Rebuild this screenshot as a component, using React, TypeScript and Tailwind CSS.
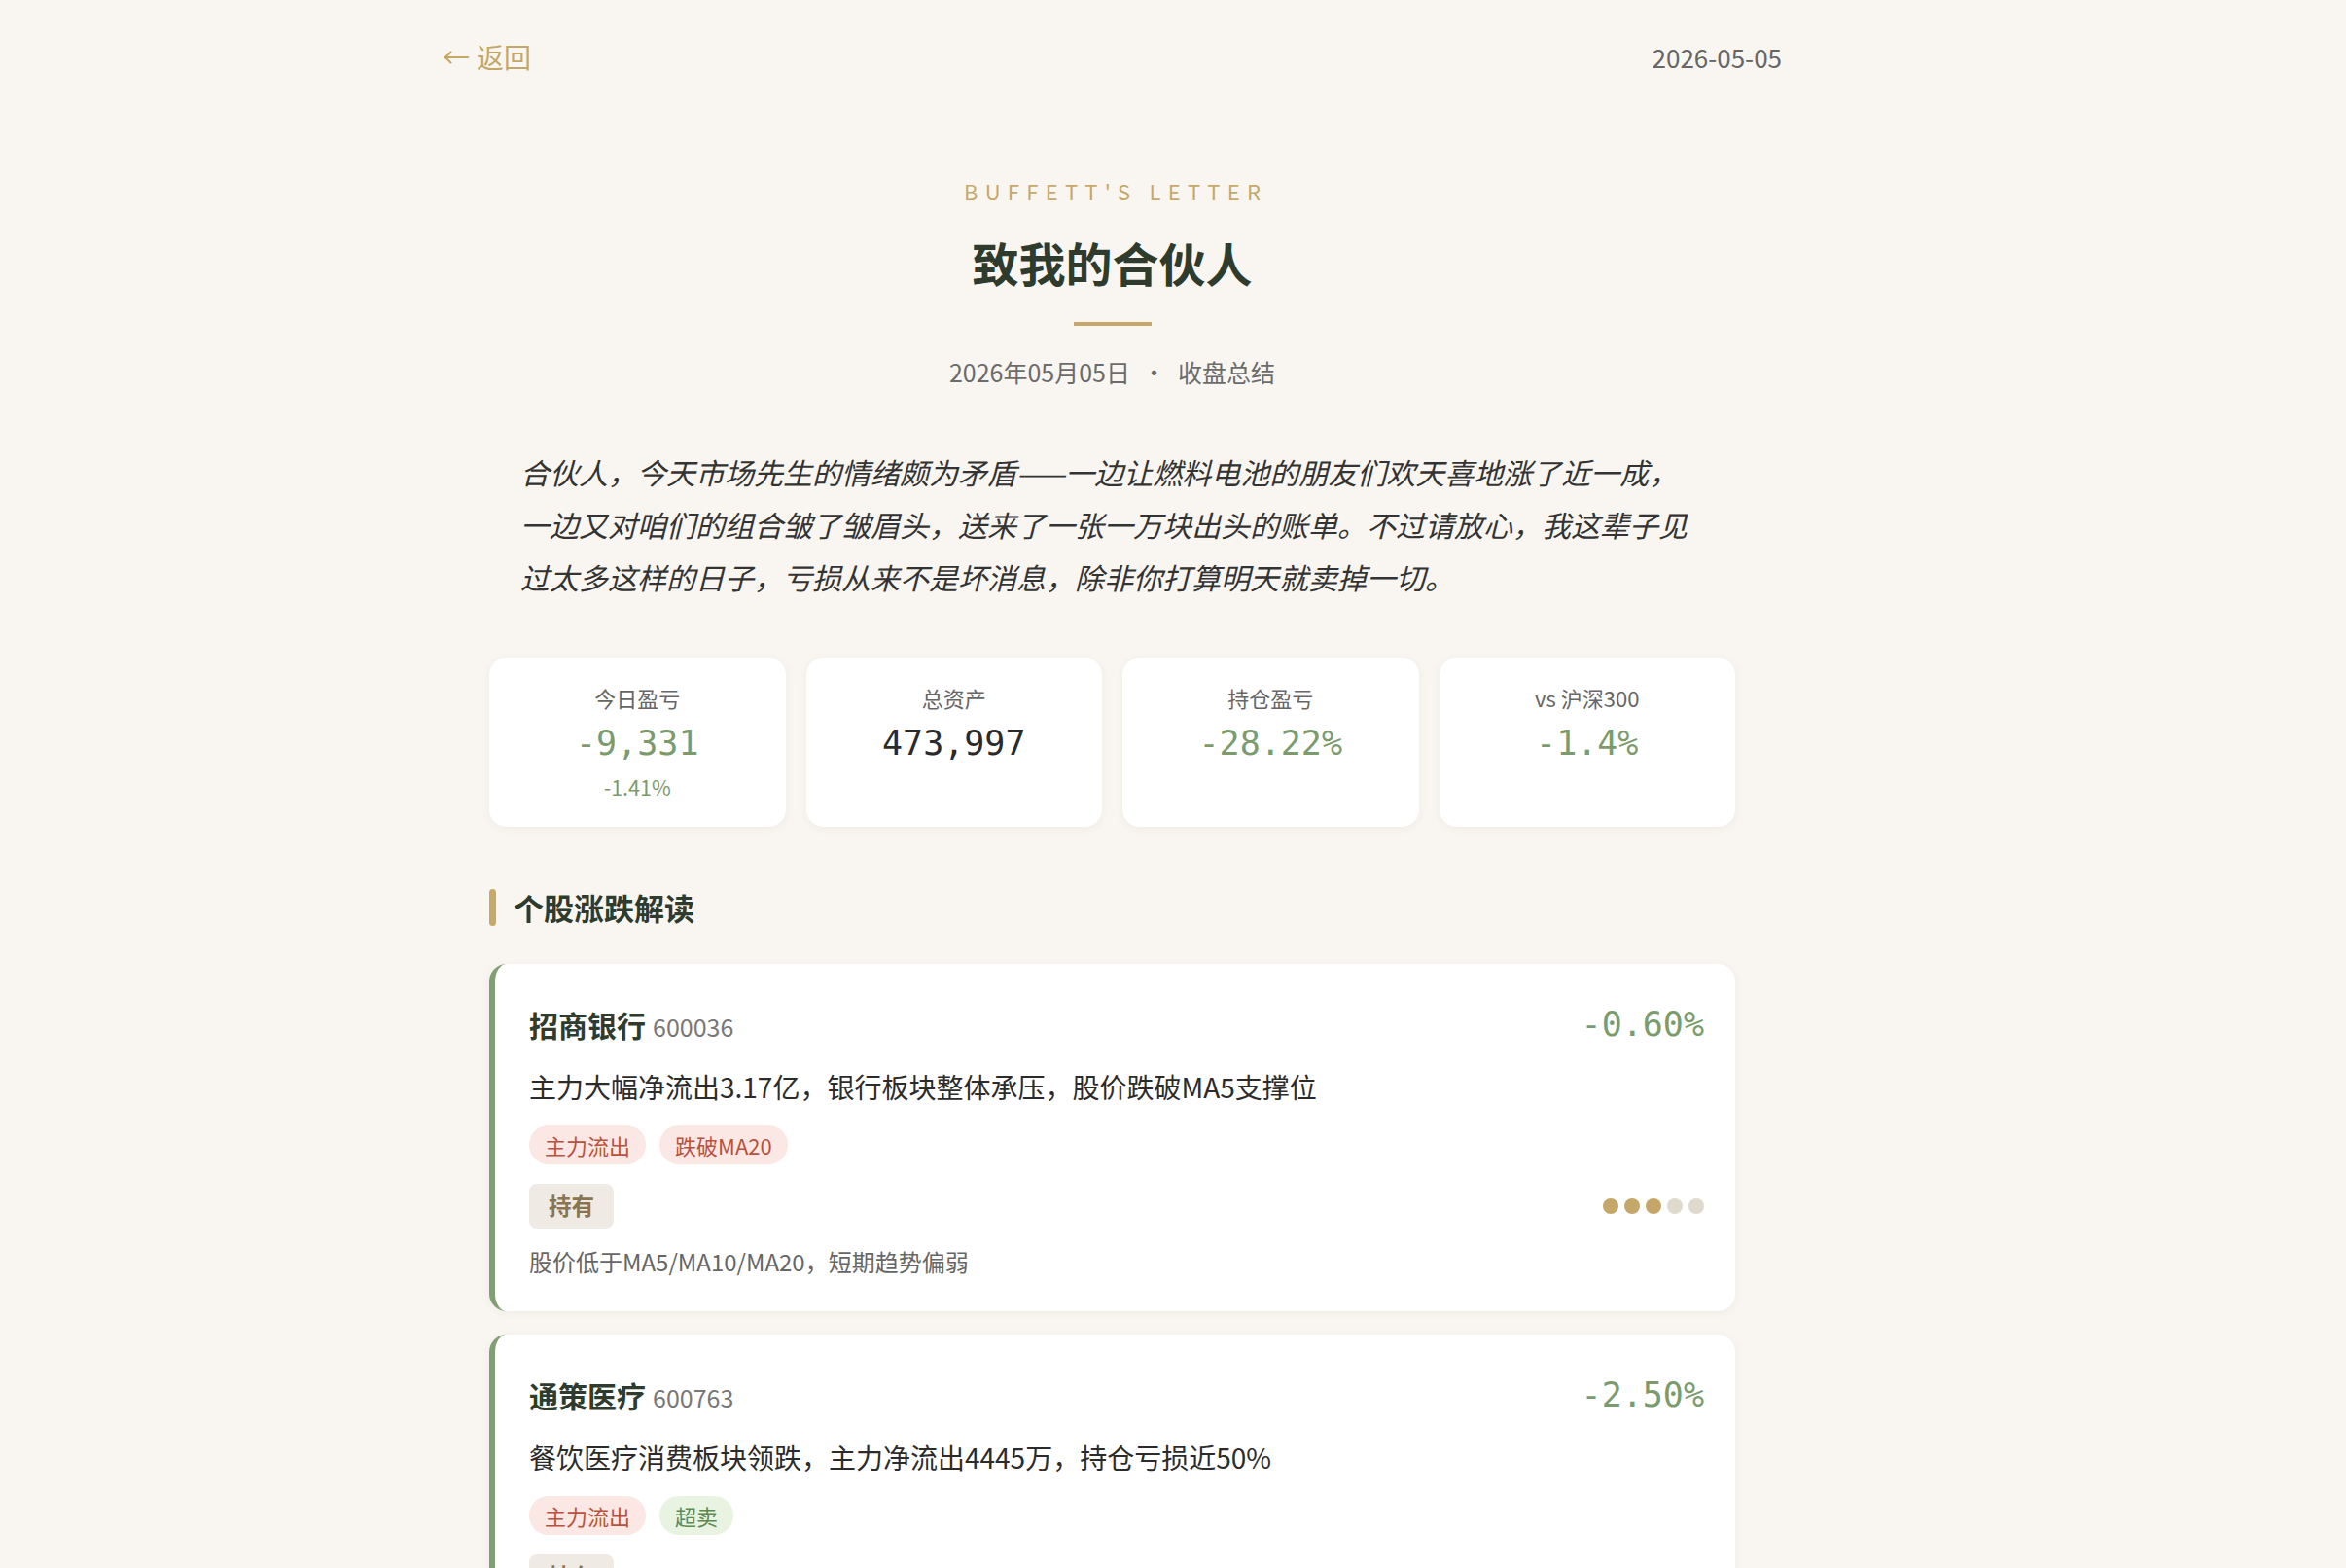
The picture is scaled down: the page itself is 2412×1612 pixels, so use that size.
import React from "react";

type Tag = { label: string; tone: "red" | "green" };

type Stock = {
  name: string;
  code: string;
  change: string;
  desc: string;
  tags: Tag[];
  action: string;
  score: number;
  note: string;
};

const stats = [
  { label: "今日盈亏", value: "-9,331", sub: "-1.41%", down: true },
  { label: "总资产", value: "473,997", down: false },
  { label: "持仓盈亏", value: "-28.22%", down: true },
  { label: "vs 沪深300", value: "-1.4%", down: true },
];

const stocks: Stock[] = [
  {
    name: "招商银行",
    code: "600036",
    change: "-0.60%",
    desc: "主力大幅净流出3.17亿，银行板块整体承压，股价跌破MA5支撑位",
    tags: [
      { label: "主力流出", tone: "red" },
      { label: "跌破MA20", tone: "red" },
    ],
    action: "持有",
    score: 3,
    note: "股价低于MA5/MA10/MA20，短期趋势偏弱",
  },
  {
    name: "通策医疗",
    code: "600763",
    change: "-2.50%",
    desc: "餐饮医疗消费板块领跌，主力净流出4445万，持仓亏损近50%",
    tags: [
      { label: "主力流出", tone: "red" },
      { label: "超卖", tone: "green" },
    ],
    action: "持有",
    score: 2,
    note: "RSI进入超卖区间，短线或有技术性反弹",
  },
];

const tagTone = {
  red: "bg-[#fbe7e3] text-[#b8513e]",
  green: "bg-[#e9f3e2] text-[#5f8a4f]",
};

function StatCard({ label, value, sub, down }: (typeof stats)[number]) {
  return (
    <div className="flex flex-col items-center rounded-[18px] bg-white pt-[25px] pb-[26px] shadow-[0_2px_10px_rgba(60,50,30,0.05)]">
      <div className="text-[22px] leading-[32px] text-[#666]">{label}</div>
      <div
        className={`mt-[9px] font-['DejaVu_Sans_Mono',monospace] text-[35px] leading-[44px] ${
          down ? "text-[#7b9b6d]" : "text-[#2a2a2a]"
        }`}
      >
        {value}
      </div>
      {sub && <div className="mt-[8px] text-[21.5px] leading-[30px] text-[#7b9b6d]">{sub}</div>}
    </div>
  );
}

function StockCard({ stock }: { stock: Stock }) {
  return (
    <div className="rounded-[18px] border-l-[6px] border-[#809f72] bg-white pt-[42px] pr-[32px] pb-[34px] pl-[35px] shadow-[0_2px_10px_rgba(60,50,30,0.05)]">
      <div className="flex h-[40px] items-center justify-between">
        <div className="flex items-baseline gap-[7px]">
          <span className="text-[30px] font-bold text-[#2e3b2d]">{stock.name}</span>
          <span className="text-[25px] text-[#777]">{stock.code}</span>
        </div>
        <span className="font-['DejaVu_Sans_Mono',monospace] text-[35px] text-[#7b9b6d]">
          {stock.change}
        </span>
      </div>
      <p className="mt-[25px] text-[28px] leading-[38px] text-[#2b2b2b]">{stock.desc}</p>
      <div className="mt-[21px] flex gap-[14px]">
        {stock.tags.map((t) => (
          <span
            key={t.label}
            className={`flex h-[40px] items-center rounded-full px-[16px] text-[22px] ${tagTone[t.tone]}`}
          >
            {t.label}
          </span>
        ))}
      </div>
      <div className="mt-[20px] flex items-center justify-between">
        <span className="flex h-[46px] items-center rounded-[8px] bg-[#efeae3] px-[20px] text-[23.5px] font-bold text-[#8a7552]">
          {stock.action}
        </span>
        <div className="flex gap-[6px]">
          {[0, 1, 2, 3, 4].map((i) => (
            <span
              key={i}
              className={`h-[16px] w-[16px] rounded-full ${i < stock.score ? "bg-[#c4a769]" : "bg-[#e0dacd]"}`}
            />
          ))}
        </div>
      </div>
      <p className="mt-[17px] text-[24px] leading-[34px] text-[#666]">{stock.note}</p>
    </div>
  );
}

export default function App() {
  return (
    <div className="min-h-screen bg-[#f9f6f1] pt-[38px] pr-[125px] pb-[80px] font-['Noto_Sans_CJK_SC','Noto_Sans',sans-serif]">
      {/* top bar */}
      <div className="mx-auto flex h-[40px] w-[1377px] items-center justify-between">
        <a className="flex items-center gap-[7px] text-[28px] text-[#c4a767]" href="#">
          <span>←</span>
          <span>返回</span>
        </a>
        <span className="text-[26px] text-[#666]">2026-05-05</span>
      </div>

      <div className="mx-auto w-[1281px]">
        {/* header */}
        <div className="flex flex-col items-center">
          <div className="mt-[102px] pl-[0.33em] text-[22px] leading-[32px] tracking-[0.33em] text-[#c5a86a]">
            BUFFETT'S LETTER
          </div>
          <h1 className="mt-[26px] text-[48px] font-bold leading-[62px] text-[#2e3b2d]">致我的合伙人</h1>
          <div className="mt-[31px] h-[4px] w-[80px] bg-[#c5a86a]" />
          <div className="mt-[29px] text-[25px] leading-[36px] text-[#6b6b6b]">
            2026年05月05日<span className="mx-[12px]">•</span>收盘总结
          </div>
        </div>

        {/* intro */}
        <p className="mt-[58px] px-[32px] text-[30px] italic leading-[54px] text-[#333]">
          合伙人，今天市场先生的情绪颇为矛盾——一边让燃料电池的朋友们欢天喜地涨了近一成，一边又对咱们的组合皱了皱眉头，送来了一张一万块出头的账单。不过请放心，我这辈子见过太多这样的日子，亏损从来不是坏消息，除非你打算明天就卖掉一切。
        </p>

        {/* stats */}
        <div className="mt-[56px] grid grid-cols-4 gap-[21px]">
          {stats.map((s) => (
            <StatCard key={s.label} {...s} />
          ))}
        </div>

        {/* section */}
        <div className="mt-[62px] flex h-[42px] items-center gap-[18px]">
          <span className="h-[38px] w-[7px] rounded-full bg-[#c5a86a]" />
          <h2 className="text-[31px] font-bold text-[#2e3b2d]">个股涨跌解读</h2>
        </div>

        <div className="mt-[37px] flex flex-col gap-[24px]">
          {stocks.map((s) => (
            <StockCard key={s.code} stock={s} />
          ))}
        </div>
      </div>
    </div>
  );
}
